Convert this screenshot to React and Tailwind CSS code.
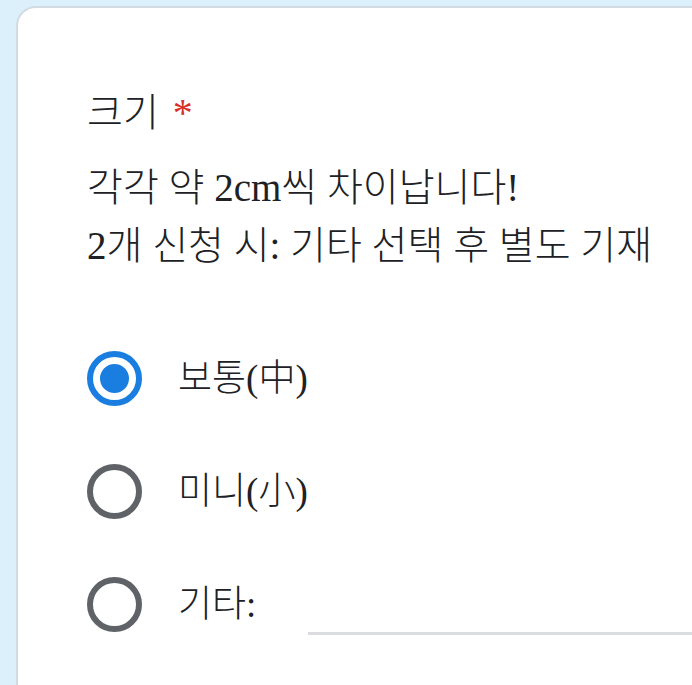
import React from "react";

const options = [
  { label: "보통(中)", checked: true },
  { label: "미니(小)", checked: false },
];

function Radio({ checked }) {
  return (
    <div
      className={
        "w-[55px] h-[55px] rounded-full border-[6px] flex items-center justify-center shrink-0 " +
        (checked ? "border-[#1a7ee0]" : "border-[#5f6368]")
      }
    >
      {checked && <div className="w-[29px] h-[29px] rounded-full bg-[#1a7ee0]" />}
    </div>
  );
}

export default function App() {
  return (
    <div
      className="w-[692px] h-[685px] overflow-hidden bg-[#dcf0fc] pl-[16px] pt-[6px] text-[#202124]"
      style={{ fontFamily: '"Liberation Serif", "Noto Sans CJK KR", serif' }}
    >
      <div className="h-[720px] w-[720px] bg-white border-2 border-[#d3dbe2] rounded-[20px] pl-[69px] pt-[79px]">
        <div className="text-[39px] leading-[52px] font-light flex items-center">
          크기
          <span className="text-[#d93025] ml-[14px] text-[40px]">*</span>
        </div>
        <div className="mt-[20px] text-[39px] leading-[58px] font-light">
          <div>각각 약 2cm씩 차이납니다!</div>
          <div>2개 신청 시: 기타 선택 후 별도 기재</div>
        </div>

        <div className="mt-[76px] flex flex-col gap-[58px]">
          {options.map((o) => (
            <div key={o.label} className="flex items-center h-[55px]">
              <Radio checked={o.checked} />
              <span className="ml-[36px] text-[37px] font-light">{o.label}</span>
            </div>
          ))}
          <div className="flex items-center h-[55px]">
            <Radio checked={false} />
            <span className="ml-[36px] text-[37px] font-light">기타:</span>
            <div className="ml-[52px] mt-[58px] flex-1 h-[3px] bg-[#dadce0]" />
          </div>
        </div>
      </div>
    </div>
  );
}
